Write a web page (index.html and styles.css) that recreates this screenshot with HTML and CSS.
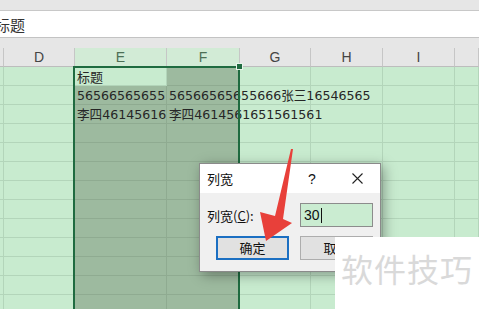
FILE: index.html
```html
<!DOCTYPE html>
<html lang="zh-CN">
<head>
  <meta charset="UTF-8">
  <title>列宽</title>
  <link rel="stylesheet" href="styles.css">
</head>
<body>
  <div class="app">
    <div class="topbar"></div>
    <div class="formula"><span class="formula-text">标题</span></div>
    <div class="gap"></div>

    <div class="sheet">
      <div class="grid">
        <!-- column headers -->
        <div class="h"></div>
        <div class="h">D</div>
        <div class="h hs">E</div>
        <div class="h hs">F</div>
        <div class="h">G</div>
        <div class="h">H</div>
        <div class="h">I</div>
        <div class="h"></div>

        <!-- row 1 -->
        <div class="c"></div><div class="c"></div>
        <div class="c cjk">标题</div>
        <div class="c s"></div>
        <div class="c"></div><div class="c"></div><div class="c"></div><div class="c"></div>
        <!-- row 2 -->
        <div class="c"></div><div class="c"></div>
        <div class="c s">56566565655</div>
        <div class="c s spill">56566565655666张三16546565</div>
        <div class="c"></div><div class="c"></div><div class="c"></div><div class="c"></div>
        <!-- row 3 -->
        <div class="c"></div><div class="c"></div>
        <div class="c s clip">李四4614561651561561</div>
        <div class="c s spill">李四4614561651561561</div>
        <div class="c"></div><div class="c"></div><div class="c"></div><div class="c"></div>
        <!-- rows 4-13 -->
        <div class="c"></div><div class="c"></div><div class="c s"></div><div class="c s"></div><div class="c"></div><div class="c"></div><div class="c"></div><div class="c"></div>
        <div class="c"></div><div class="c"></div><div class="c s"></div><div class="c s"></div><div class="c"></div><div class="c"></div><div class="c"></div><div class="c"></div>
        <div class="c"></div><div class="c"></div><div class="c s"></div><div class="c s"></div><div class="c"></div><div class="c"></div><div class="c"></div><div class="c"></div>
        <div class="c"></div><div class="c"></div><div class="c s"></div><div class="c s"></div><div class="c"></div><div class="c"></div><div class="c"></div><div class="c"></div>
        <div class="c"></div><div class="c"></div><div class="c s"></div><div class="c s"></div><div class="c"></div><div class="c"></div><div class="c"></div><div class="c"></div>
        <div class="c"></div><div class="c"></div><div class="c s"></div><div class="c s"></div><div class="c"></div><div class="c"></div><div class="c"></div><div class="c"></div>
        <div class="c"></div><div class="c"></div><div class="c s"></div><div class="c s"></div><div class="c"></div><div class="c"></div><div class="c"></div><div class="c"></div>
        <div class="c"></div><div class="c"></div><div class="c s"></div><div class="c s"></div><div class="c"></div><div class="c"></div><div class="c"></div><div class="c"></div>
        <div class="c"></div><div class="c"></div><div class="c s"></div><div class="c s"></div><div class="c"></div><div class="c"></div><div class="c"></div><div class="c"></div>
        <div class="c"></div><div class="c"></div><div class="c s"></div><div class="c s"></div><div class="c"></div><div class="c"></div><div class="c"></div><div class="c"></div>
      </div>

      <div class="selection"><span class="handle"></span></div>
    </div>

    <div class="dialog">
      <div class="dlg-title">
        <span class="dlg-name">列宽</span>
        <span class="dlg-help">?</span>
        <span class="dlg-close">
          <svg width="11" height="11" viewBox="0 0 11 11"><path d="M0.5 0.5 L10.5 10.5 M10.5 0.5 L0.5 10.5" stroke="#222" stroke-width="1.1" fill="none"/></svg>
        </span>
      </div>
      <div class="dlg-body">
        <div class="dlg-row">
          <span class="dlg-label">列宽(<u>C</u>):</span>
          <div class="dlg-input">30<span class="caret"></span></div>
        </div>
        <div class="dlg-row dlg-buttons">
          <div class="btn btn-ok">确定</div>
          <div class="btn">取消</div>
        </div>
      </div>
    </div>

    <svg class="arrow" width="60" height="100" viewBox="0 0 60 100">
      <polygon points="48,4 38,74 47,78 21,96 15,67 30,71 46,4" fill="#e8403a"/>
    </svg>

    <div class="watermark">软件技巧</div>
  </div>
</body>
</html>
```

FILE: styles.css
```css
body {
  margin: 0;
  font-family: "Liberation Sans", "Noto Sans CJK SC", sans-serif;
  background: #e6e6e6;
  overflow: hidden;
}
.app {
  position: relative;
  width: 479px;
  height: 309px;
  overflow: hidden;
  background: #e6e6e6;
}
.topbar {
  height: 10px;
}
.formula {
  height: 28px;
  box-sizing: border-box;
  border-top: 1px solid #c8c8c8;
  border-bottom: 1px solid #c3c3c3;
  background: #fff;
  display: flex;
  align-items: center;
}
.formula-text {
  margin-left: -5px;
  font-family: "Noto Sans CJK SC", sans-serif;
  font-size: 15px;
  color: #333;
}
.gap {
  height: 10px;
}
.sheet {
  position: relative;
}
.grid {
  display: grid;
  grid-template-columns: 4px 71px 92px 73px 71px 72px 72px 1fr;
  grid-auto-rows: 19px;
}
.h {
  background: #e6e6e6;
  border-right: 1px solid #c6c6c6;
  border-bottom: 1px solid #bdbdbd;
  box-sizing: border-box;
  font-size: 14px;
  line-height: 18px;
  color: #444;
  text-align: center;
}
.hs {
  background: #d2ebd6;
  color: #4d6f55;
}
.c {
  background: #c8ebcf;
  border-right: 1px solid #b3d5ba;
  border-bottom: 1px solid #b3d5ba;
  box-sizing: border-box;
  padding: 1px 0 0 2px;
  font-family: "DejaVu Sans", "Noto Sans CJK SC", sans-serif;
  font-size: 12.6px;
  line-height: 18px;
  color: #262626;
  white-space: nowrap;
}
.cjk {
  font-family: "Noto Sans CJK SC", sans-serif;
  font-size: 13px;
}
.s {
  background: #9dba9f;
  border-color: #8fab91;
}
.clip {
  overflow: hidden;
}
.spill {
  position: relative;
  z-index: 1;
}
.selection {
  position: absolute;
  left: 73px;
  top: 18px;
  width: 167px;
  height: 260px;
  box-sizing: border-box;
  border: 2px solid #1f6b40;
  z-index: 2;
}
.handle {
  position: absolute;
  right: -5px;
  top: -5px;
  width: 5px;
  height: 5px;
  background: #1f6b40;
  border: 1px solid #e8f3ea;
}
.dialog {
  position: absolute;
  left: 199px;
  top: 163px;
  width: 182px;
  height: 109px;
  box-sizing: border-box;
  border: 1px solid #8a8a8a;
  background: #f0f0f0;
  box-shadow: 3px 3px 12px rgba(0,0,0,0.35);
  z-index: 3;
  font-family: "Noto Sans CJK SC", sans-serif;
  font-size: 13px;
  color: #111;
}
.dlg-title {
  height: 29px;
  background: #fff;
  display: flex;
  align-items: center;
  padding: 0 3px 0 7px;
}
.dlg-name {
  flex: 1;
}
.dlg-help {
  width: 20px;
  margin-right: 15px;
  text-align: center;
  font-family: "Liberation Sans", sans-serif;
  font-size: 14px;
}
.dlg-close {
  width: 40px;
  display: flex;
  justify-content: center;
}
.dlg-body {
  padding: 10px 7px 0 7px;
}
.dlg-row {
  display: flex;
  align-items: center;
  justify-content: space-between;
}
.dlg-label u {
  text-decoration-thickness: 1px;
}
.dlg-input {
  width: 73px;
  height: 24px;
  box-sizing: border-box;
  border: 1px solid #8c8c8c;
  background: #caecd1;
  padding-left: 3px;
  font-family: "Liberation Sans", sans-serif;
  font-size: 14px;
  line-height: 22px;
  display: flex;
  align-items: center;
}
.caret {
  display: inline-block;
  width: 1px;
  height: 15px;
  background: #111;
  margin-left: 1px;
}
.dlg-buttons {
  margin-top: 9px;
  padding-left: 9px;
}
.btn {
  width: 73px;
  height: 24px;
  box-sizing: border-box;
  border: 1px solid #adadad;
  background: #e1e1e1;
  text-align: center;
  line-height: 21px;
}
.btn-ok {
  border: 2px solid #1b6fc2;
  line-height: 20px;
}
.arrow {
  position: absolute;
  left: 245px;
  top: 145px;
  z-index: 4;
}
.watermark {
  position: absolute;
  left: 335px;
  top: 237px;
  right: 0;
  bottom: 0;
  background: #fff;
  z-index: 5;
  padding: 11px 0 0 6px;
  font-family: "Noto Sans CJK SC", sans-serif;
  font-size: 32px;
  line-height: 40px;
  color: #d9d9d9;
  letter-spacing: 1px;
}
```
